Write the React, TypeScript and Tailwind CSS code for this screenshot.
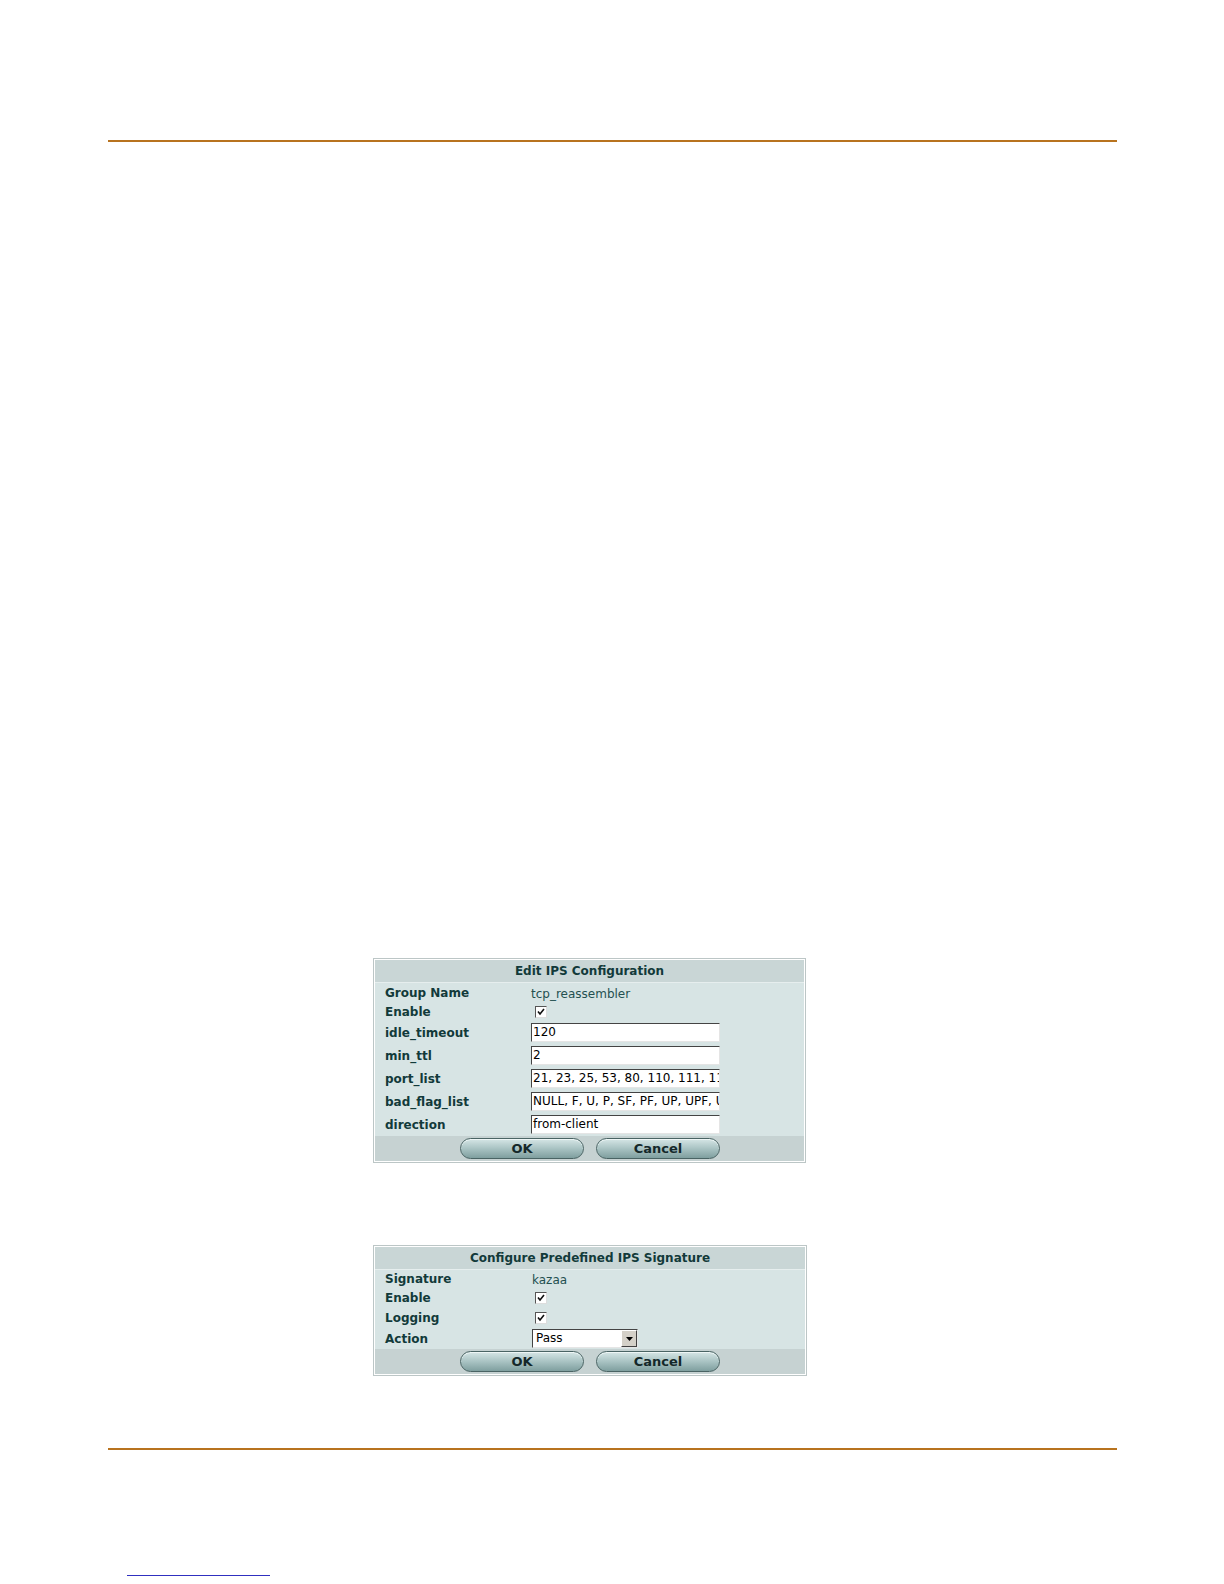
import React from 'react'

const FONT = { fontFamily: '"DejaVu Sans", Verdana, sans-serif' }

function Check() {
  return (
    <div className="w-[12px] h-[12px] bg-white border border-t-[#555] border-l-[#555] border-b-[#ddd] border-r-[#ddd] flex items-center justify-center">
      <svg width="8" height="8" viewBox="0 0 8 8">
        <path d="M1 3.5 L3 6 L7 1" fill="none" stroke="#111" strokeWidth="1.6" />
      </svg>
    </div>
  )
}

function Field({ value }: { value: string }) {
  return (
    <div className="w-[189px] h-[19px] bg-white border border-t-[#444] border-l-[#444] border-b-[#e5e5e5] border-r-[#e5e5e5] overflow-hidden whitespace-nowrap text-[12px] leading-[17px] pl-[1px] text-black">
      {value}
    </div>
  )
}

function Row({ label, h, children }: { label: string; h: string; children: React.ReactNode }) {
  return (
    <div className={`flex items-center ${h}`}>
      <div className="w-[156px] pl-[10px] font-bold text-[12px] text-[#123a3a]">{label}</div>
      <div className="flex-1">{children}</div>
    </div>
  )
}

function Buttons() {
  const btn =
    'w-[124px] h-[21px] rounded-full border border-[#4a6464] bg-gradient-to-b from-[#d6e6e6] via-[#a9c3c3] to-[#7f9f9f] flex items-center justify-center font-bold text-[13px] text-[#14282a] shadow-[inset_0_1px_0_#eef6f6]'
  return (
    <div className="h-[25px] bg-[#c6d2d2] flex items-center pl-[85px] gap-[12px]">
      <div className={btn}>OK</div>
      <div className={btn}>Cancel</div>
    </div>
  )
}

function Panel({ title, width, children }: { title: string; width: string; children: React.ReactNode }) {
  return (
    <div className={`${width} border border-[#bcc6c6] bg-white p-px`}>
      <div className="h-[23px] bg-[#c9d6d6] border-b border-[#e6eeee] flex items-center justify-center font-bold text-[12px] text-[#123a3a]">
        {title}
      </div>
      <div className="bg-[#d7e4e4]">{children}</div>
    </div>
  )
}

export default function App() {
  return (
    <div className="w-[1224px] h-[1584px] bg-white relative" style={FONT}>
      <div className="pt-[140px]">
        <div className="ml-[108px] w-[1009px] h-[2px] bg-[#b8731f]" />
      </div>

      <div className="ml-[373px] mt-[816px]">
        <Panel title="Edit IPS Configuration" width="w-[433px]">
          <Row label="Group Name" h="h-[19px]">
            <span className="text-[12px] text-[#245050]">tcp_reassembler</span>
          </Row>
          <Row label="Enable" h="h-[19px]">
            <div className="pl-[4px]">
              <Check />
            </div>
          </Row>
          <Row label="idle_timeout" h="h-[23px]">
            <Field value="120" />
          </Row>
          <Row label="min_ttl" h="h-[23px]">
            <Field value="2" />
          </Row>
          <Row label="port_list" h="h-[23px]">
            <Field value="21, 23, 25, 53, 80, 110, 111, 119, 143" />
          </Row>
          <Row label="bad_flag_list" h="h-[23px]">
            <Field value="NULL, F, U, P, SF, PF, UP, UPF, UAPF" />
          </Row>
          <Row label="direction" h="h-[23px]">
            <Field value="from-client" />
          </Row>
          <Buttons />
        </Panel>
      </div>

      <div className="ml-[373px] mt-[82px]">
        <Panel title="Configure Predefined IPS Signature" width="w-[434px]">
          <Row label="Signature" h="h-[18px]">
            <span className="text-[12px] text-[#245050] pl-px">kazaa</span>
          </Row>
          <Row label="Enable" h="h-[19px]">
            <div className="pl-[4px]">
              <Check />
            </div>
          </Row>
          <Row label="Logging" h="h-[21px]">
            <div className="pl-[4px]">
              <Check />
            </div>
          </Row>
          <Row label="Action" h="h-[21px]">
            <div className="ml-px w-[106px] h-[19px] bg-white border border-t-[#444] border-l-[#444] border-b-[#e5e5e5] border-r-[#e5e5e5] flex">
              <div className="flex-1 text-[12px] leading-[17px] pl-[3px] text-black">Pass</div>
              <div className="w-[16px] h-full bg-[#d4d0c8] border border-t-white border-l-white border-b-[#404040] border-r-[#404040] flex items-center justify-center">
                <svg width="7" height="4" viewBox="0 0 7 4">
                  <path d="M0 0 L7 0 L3.5 4 Z" fill="#000" />
                </svg>
              </div>
            </div>
          </Row>
          <Buttons />
        </Panel>
      </div>

      <div className="ml-[108px] mt-[72px] w-[1009px] h-[2px] bg-[#b8731f]" />

      <div className="ml-[127px] mt-[125px] w-[143px] h-px bg-[#3030c0]" />
    </div>
  )
}
